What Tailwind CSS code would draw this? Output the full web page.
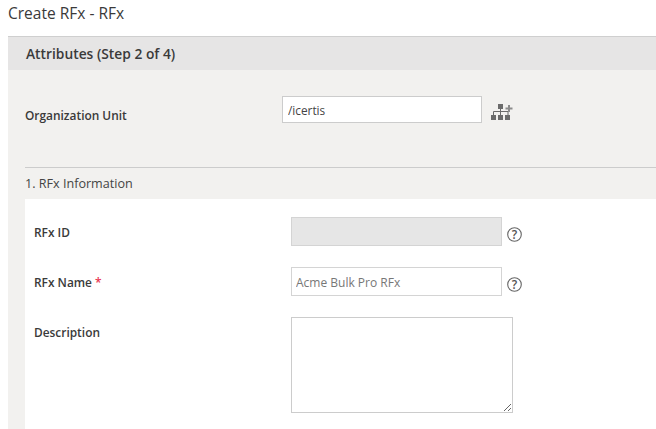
<!DOCTYPE html>
<html lang="en">

<head>
    <meta charset="UTF-8">
    <title>Create RFx - RFx</title>
    <script src="https://cdn.jsdelivr.net/npm/@tailwindcss/browser@4"></script>
</head>

<body class="bg-white h-[429px] overflow-hidden font-['Open_Sans',sans-serif]">
    <h1 class="h-9 pl-2 pt-[3px] text-[15.5px] leading-5 font-normal text-[#3a3a3a]">Create RFx - RFx</h1>

    <div class="ml-2 h-[393px] bg-[#f2f1ef] border-t border-[#cfcfcf] overflow-hidden">
        <!-- Step header -->
        <div class="h-[33px] bg-[#e6e5e5] pl-[18px] pt-[1px] flex items-center text-[13.8px] font-[560] text-[#3a3a3a]">Attributes (Step 2 of 4)</div>

        <!-- Organization unit -->
        <div class="h-[97px] pl-[17px] pt-[26px] flex items-start">
            <label class="w-[257px] h-[27px] flex items-center pt-[12px] text-[11.9px] font-[560] text-[#3a3a3a]">Organization Unit</label>
            <input type="text" value="/icertis" class="w-[200px] h-[27px] bg-white border border-[#ccc] pl-[5px] pt-[1px] text-[11.8px] text-[#444] outline-none">
            <svg class="ml-[9px] mt-[8px]" width="22" height="16" viewBox="0 0 22 16" fill="#6b6b6b">
                <rect x="7" y="0" width="5" height="5" />
                <rect x="0" y="11" width="5" height="5" />
                <rect x="7" y="11" width="5" height="5" />
                <rect x="14" y="11" width="5" height="5" />
                <path d="M2.500 11V7.500H17V11M9.500 5V11" fill="none" stroke="#6b6b6b" />
                <path d="M14.500 4.500H21.500M18 1V8" fill="none" stroke="#8c8c8c" stroke-width="2" />
            </svg>
        </div>

        <!-- Section -->
        <div class="ml-[17px] border-t border-[#ccc]">
            <div class="h-[31px] pt-[2px] flex items-center text-[12.6px] text-[#444]">1. RFx Information</div>

            <div class="bg-white h-[240px] pl-[9px] pt-[18px] text-[11.9px] font-[560] text-[#3a3a3a]">
                <div class="flex items-start h-[50px]">
                    <label class="w-[257px] leading-[28px] pt-[1px]">RFx ID</label>
                    <input type="text" disabled class="w-[211px] h-[29px] bg-[#e6e6e6] border border-[#d4d4d4] outline-none">
                    <svg class="ml-[5px] mt-[10px]" width="15" height="15" viewBox="0 0 15 15">
                        <circle cx="7.500" cy="7.500" r="6.800" fill="none" stroke="#666" stroke-width="1.100" />
                        <text x="7.500" y="12" text-anchor="middle" font-size="12" font-weight="600" fill="#555">?</text>
                    </svg>
                </div>
                <div class="flex items-start h-[50px]">
                    <label class="w-[257px] leading-[28px] pt-[1px]">RFx Name <span class="text-[#e8344e]">*</span></label>
                    <input type="text" value="Acme Bulk Pro RFx" class="w-[211px] h-[29px] bg-white border border-[#d4d4d4] pl-[4px] pt-[1px] text-[12px] font-normal text-[#777] outline-none">
                    <svg class="ml-[5px] mt-[10px]" width="15" height="15" viewBox="0 0 15 15">
                        <circle cx="7.500" cy="7.500" r="6.800" fill="none" stroke="#666" stroke-width="1.100" />
                        <text x="7.500" y="12" text-anchor="middle" font-size="12" font-weight="600" fill="#555">?</text>
                    </svg>
                </div>
                <div class="flex items-start">
                    <label class="w-[257px] leading-[28px] pt-[1px]">Description</label>
                    <textarea class="block w-[222px] h-[96px] bg-white border border-[#ccc] outline-none"></textarea>
                </div>
            </div>
        </div>
    </div>
</body>

</html>
